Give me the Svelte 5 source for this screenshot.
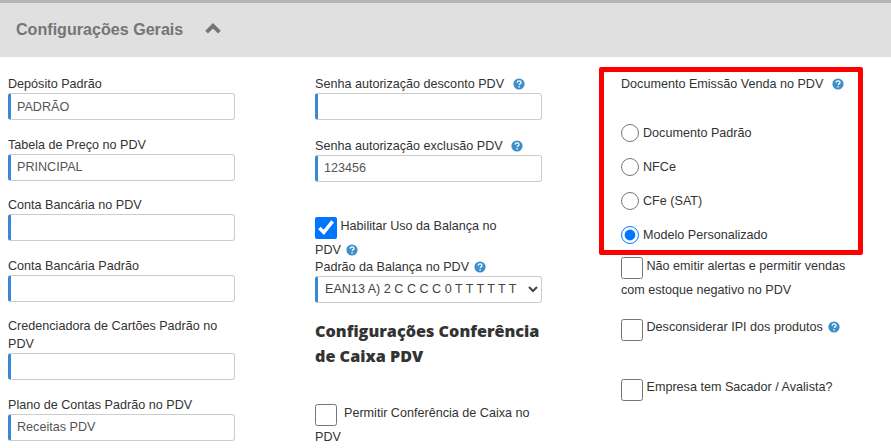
<script>
  const col1 = [
    { label: 'Depósito Padrão', value: 'PADRÃO' },
    { label: 'Tabela de Preço no PDV', value: 'PRINCIPAL' },
    { label: 'Conta Bancária no PDV', value: '' },
    { label: 'Conta Bancária Padrão', value: '' },
    { label: 'Credenciadora de Cartões Padrão no PDV', value: '' },
    { label: 'Plano de Contas Padrão no PDV', value: 'Receitas PDV' }
  ];
  const radios = [
    { label: 'Documento Padrão', checked: false },
    { label: 'NFCe', checked: false },
    { label: 'CFe (SAT)', checked: false },
    { label: 'Modelo Personalizado', checked: true }
  ];
</script>

{#snippet help(near = false)}
  <svg class="help" class:near viewBox="0 0 12 12" aria-hidden="true">
    <circle cx="6" cy="6" r="5.6" fill="#3d8fc9" />
    <path d="M4.1 4.6c.1-1.2 1-1.8 2-1.8 1.1 0 1.9.7 1.9 1.6 0 .8-.5 1.2-1 1.5-.5.3-.7.5-.7 1.1" fill="none" stroke="#fff" stroke-width="1.3" />
    <rect x="5.4" y="8.1" width="1.4" height="1.4" fill="#fff" />
  </svg>
{/snippet}

<div class="page">
  <header class="bar">
    <h2>Configurações Gerais</h2>
    <svg class="chev" viewBox="0 0 16 11" aria-hidden="true">
      <path d="M1.6 9.200 8 2.800 14.400 9.200" fill="none" stroke="#757575" stroke-width="3.800" />
    </svg>
  </header>

  <div class="cols">
    <div class="col first">
      {#each col1 as f}
        <div class="group">
          <label for={f.label}>{f.label}</label>
          <input id={f.label} class="field" type="text" value={f.value} />
        </div>
      {/each}
    </div>

    <div class="col second">
      <div class="group">
        <label for="s1">Senha autorização desconto PDV {@render help()}</label>
        <input id="s1" class="field" type="text" />
      </div>
      <div class="group">
        <label for="s2">Senha autorização exclusão PDV {@render help()}</label>
        <input id="s2" class="field" type="text" value="123456" />
      </div>
      <div class="check balance">
        <input type="checkbox" checked />
        Habilitar Uso da Balança no PDV {@render help(true)}
      </div>
      <div class="scale">
        <label for="s3">Padrão da Balança no PDV {@render help(true)}</label>
        <select id="s3" class="field sel">
          <option>EAN13 A) 2 C C C C 0 T T T T T T</option>
        </select>
      </div>
      <h3>Configurações Conferência de Caixa PDV</h3>
      <div class="check caixa">
        <input type="checkbox" />
        &nbsp;Permitir Conferência de Caixa no PDV
      </div>
    </div>

    <div class="col third">
      <div class="redbox">
        <div class="doc">Documento Emissão Venda no PDV {@render help()}</div>
        <div class="radios">
          {#each radios as r}
            <div class="radio">
              <input type="radio" name="doc" checked={r.checked} />
              <span>{r.label}</span>
            </div>
          {/each}
        </div>
      </div>
      <div class="check alert">
        <input type="checkbox" />
        Não emitir alertas e permitir vendas com estoque negativo no PDV
      </div>
      <div class="check ipi">
        <input type="checkbox" />
        Desconsiderar IPI dos produtos {@render help(true)}
      </div>
      <div class="check sacador">
        <input type="checkbox" />
        Empresa tem Sacador / Avalista?
      </div>
    </div>
  </div>
</div>

<style>
  :global(body) {
    margin: 0;
    background: #fff;
    overflow: hidden;
  }
  .page {
    width: 891px;
    height: 448px;
    overflow: hidden;
    font-family: "Liberation Sans", Arial, sans-serif;
    font-size: 12.6px;
    line-height: 18px;
    color: #333;
    box-sizing: border-box;
  }
  .bar {
    height: 57px;
    box-sizing: border-box;
    background: #e0e0e0;
    border-top: 3px solid #b4b4b4;
    display: flex;
    align-items: center;
    padding: 0 0 3px 16px;
    margin-bottom: 18px;
  }
  h2 {
    margin: 0;
    font-size: 16.100px;
    font-weight: 700;
    color: #757575;
  }
  .chev {
    width: 16px;
    height: 11px;
    margin-left: 22px;
  }
  .cols {
    display: grid;
    grid-template-columns: 227px 227px 250px;
    column-gap: 80px;
    padding-left: 8px;
  }
  .col { min-width: 0; }
  .col.third { margin-left: -1px; }
  .first .group { margin-bottom: 15.6px; }
  .group label { display: block; }
  .field {
    display: block;
    box-sizing: border-box;
    width: 227px;
    height: 27px;
    border: 1px solid #ccc;
    border-left: 3px solid #3a87d8;
    border-radius: 3px;
    padding: 0 6px;
    font: inherit;
    color: #555;
    background: #fff;
    outline: none;
  }
  .second .group { margin-bottom: 16.500px; }
  .help {
    width: 12px;
    height: 12px;
    margin-left: 5px;
    vertical-align: -2px;
  }
  .help.near { margin-left: 1.500px; }
  .check {
    line-height: 24px;
  }
  .check input {
    appearance: auto;
    width: 22px;
    height: 22px;
    margin: 0;
    vertical-align: -7px;
    transform: translateY(2px);
    accent-color: #0075ff;
  }
  .ipi input, .sacador input {
    transform: translateY(3px);
  }
  .balance {
    margin-top: 32px;
    width: 200px;
  }
  .scale label { display: block; }
  .scale { margin-top: -4px; }
  .sel {
    padding: 0 3px;
    color: #444;
    overflow: hidden;
  }
  h3 {
    margin: 16px 0 0;
    font-family: "Open Sans", sans-serif;
    font-weight: 800;
    font-size: 16.200px;
    line-height: 25px;
    color: #333;
  }
  .caixa {
    margin-top: 32px;
  }
  .redbox {
    box-sizing: border-box;
    margin: -8px 0 0 -22px;
    width: 264px;
    height: 188px;
    border: 5px solid #f00;
    border-radius: 2px;
    padding: 3px 0 0 17px;
  }
  .radios {
    margin-top: 31px;
    display: flex;
    flex-direction: column;
    gap: 16px;
  }
  .radio {
    display: flex;
    align-items: center;
    height: 18px;
    gap: 4px;
  }
  .radio input {
    width: 18px;
    height: 18px;
    margin: 0;
    accent-color: #0075ff;
  }
  .alert { margin-top: -1px; width: 230px; }
  .ipi { margin-top: 13px; }
  .sacador { margin-top: 36px; }
</style>
